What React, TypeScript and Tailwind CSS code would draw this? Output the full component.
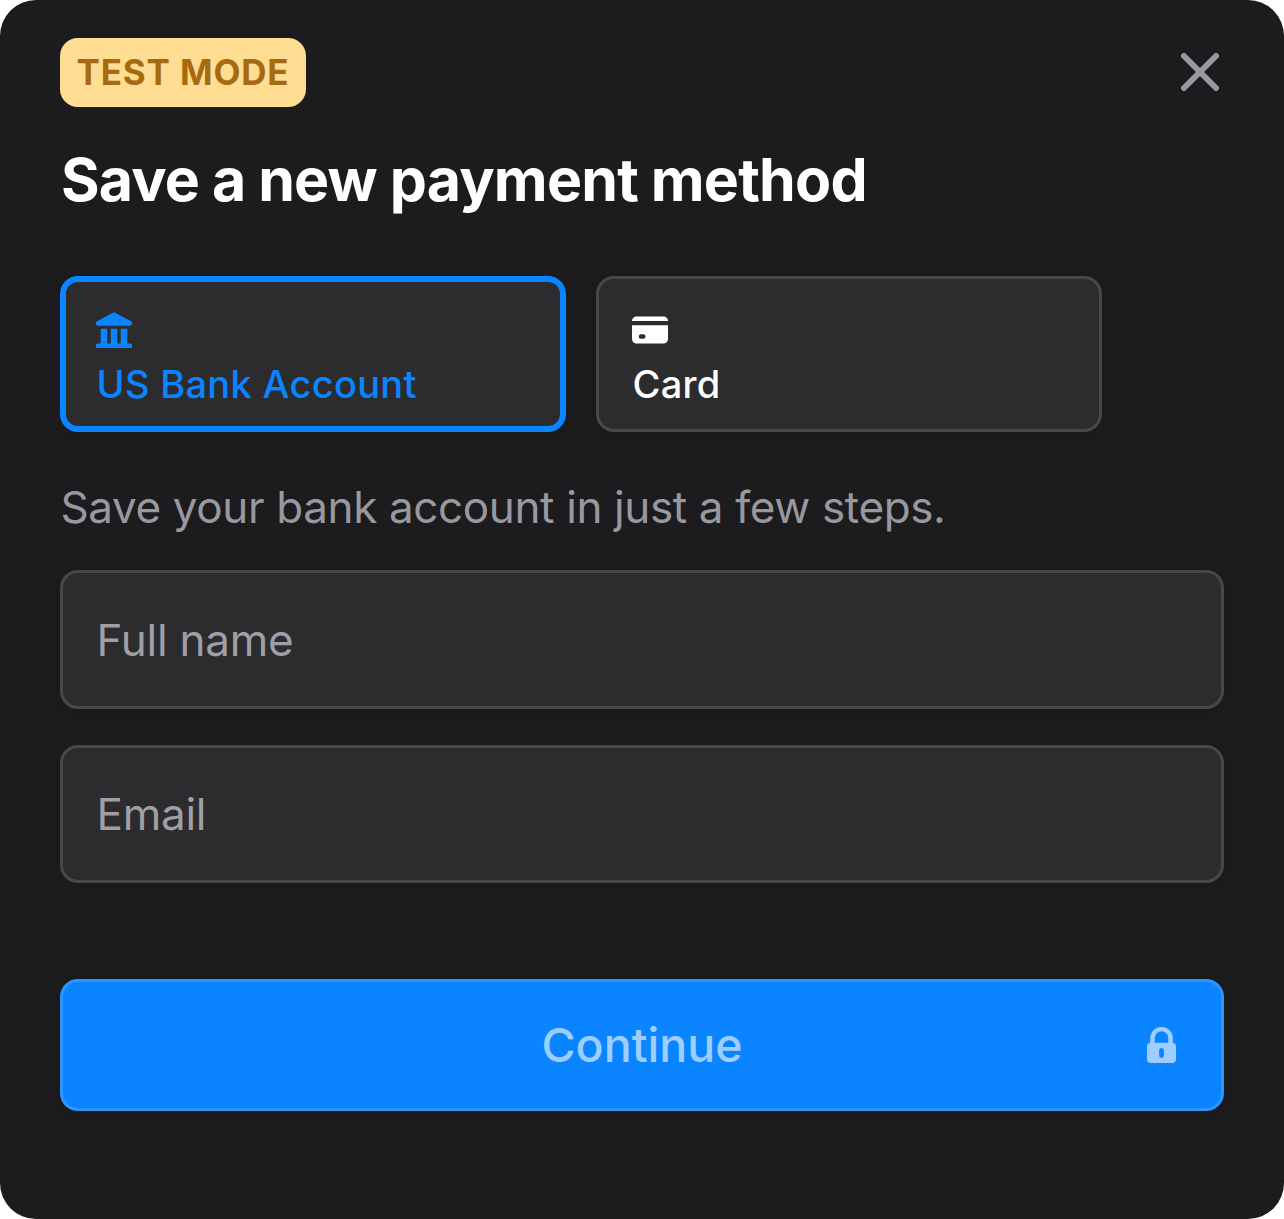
function CloseIcon() {
  return (
    <svg viewBox="0 0 38 38" className="h-[38px] w-[38px]" fill="none" stroke="#98989f" strokeWidth="6" strokeLinecap="round">
      <path d="M3 3 35 35M35 3 3 35" />
    </svg>
  );
}

function BankIcon() {
  return (
    <svg viewBox="0 0 36 36" className="h-9 w-9 shrink-0" fill="currentColor">
      <path d="M17.2.4a1.7 1.7 0 0 1 1.600 0L35 9.300c.6.3 1 .9 1 1.600v.8c0 1.100-.9 2-2 2H2c-1.100 0-2-.9-2-2v-.8c0-.7.4-1.300 1-1.600z" />
      <path d="M4.700 16.700h6.600v14.800h3.400V16.700h6.600v14.800h3.400V16.700h6.600v14.800H34a2 2 0 0 1 2 2V36H0v-2.500a2 2 0 0 1 2-2h2.700z" />
    </svg>
  );
}

function CardIcon() {
  return (
    <svg viewBox="0 0 36 36" className="h-9 w-9 shrink-0" fill="currentColor">
      <path d="M4.500 4.400h27A4.500 4.500 0 0 1 36 8.900H0a4.500 4.500 0 0 1 4.500-4.500z" />
      <path
        fillRule="evenodd"
        d="M0 13.300h36v13.800a4.500 4.500 0 0 1-4.500 4.500h-27A4.500 4.500 0 0 1 0 27.100zM9 22.300a2.250 2.250 0 0 0 0 4.500h2.300a2.250 2.250 0 0 0 0-4.500z"
      />
    </svg>
  );
}

function LockIcon() {
  return (
    <svg viewBox="0 0 29 36" className="h-9 w-[29px]" fill="currentColor">
      <path
        fillRule="evenodd"
        d="M3.200 15.700V11.300a11.300 11.300 0 0 1 22.600 0v4.400A3.700 3.700 0 0 1 29 19.400V32a4 4 0 0 1-4 4H4a4 4 0 0 1-4-4V19.400a3.700 3.700 0 0 1 3.200-3.700zM7.700 15.700h13.600V11.100a6.800 6.800 0 0 0-13.600 0zM14.500 21a2.400 2.400 0 0 0-2.400 2.400v5.200a2.400 2.400 0 0 0 4.800 0v-5.200a2.400 2.400 0 0 0-2.400-2.400z"
      />
    </svg>
  );
}

export default function App() {
  return (
    <div className="h-[1219px] w-[1284px] bg-white font-['Inter',sans-serif]">
      <main className="flex h-full flex-col rounded-[36px] bg-[#1c1c1e] px-[60px] pt-[38px]">
        <header className="flex items-start justify-between">
          <span className="flex h-[69px] w-[246px] items-center rounded-[18px] bg-[#ffdd93] pl-[16.5px] text-[35px] font-[670] whitespace-nowrap tracking-[0.85px] text-[#a86a10]">
            TEST MODE
          </span>
          <button aria-label="Close" className="mt-[15px] mr-[5px]">
            <CloseIcon />
          </button>
        </header>

        <h1 className="mt-[38px] pl-px text-[59px] leading-[70px] font-bold tracking-[-0.8px] [word-spacing:-0.4px] text-white">
          Save a new payment method
        </h1>

        <div className="mt-[61px] flex gap-[30px]">
          <button className="flex h-[156px] w-[506px] flex-col items-start rounded-[18px] border-[6px] border-[#0a84ff] bg-[#2c2c2e] px-[30px] pt-[30px] text-[#0a84ff] shadow-[0_3px_9px_rgba(0,0,0,0.08)]">
            <BankIcon />
            <span className="mt-[13px] pl-[0.5px] text-[38px] leading-[46px] font-medium tracking-[0.3px]">US Bank Account</span>
          </button>
          <button className="flex h-[156px] w-[506px] flex-col items-start rounded-[18px] border-[3px] border-[#48484a] bg-[#2c2c2e] px-[33px] pt-[33px] text-white shadow-[0_3px_9px_rgba(0,0,0,0.08)]">
            <CardIcon />
            <span className="mt-[13px] pl-[0.5px] text-[38px] leading-[46px] font-medium tracking-[0.3px]">Card</span>
          </button>
        </div>

        <p className="mt-12 pl-[0.5px] text-[44px] leading-[54px] tracking-[-0.37px] text-[#98989f]">
          Save your bank account in just a few steps.
        </p>

        <div className="mt-9 flex flex-col gap-9 text-[44px] tracking-[-0.25px] text-[#9f9fa5]">
          <div className="flex h-[139px] items-center rounded-[18px] border-[3px] border-[#48484a] bg-[#2c2c2e] px-[33.5px] shadow-[0_3px_9px_rgba(0,0,0,0.08)]">
            Full name
          </div>
          <div className="flex h-[138px] items-center rounded-[18px] border-[3px] border-[#48484a] bg-[#2c2c2e] px-[33.5px] shadow-[0_3px_9px_rgba(0,0,0,0.08)]">
            Email
          </div>
        </div>

        <button className="mt-24 grid h-[132px] grid-cols-[1fr_auto_1fr] items-center rounded-[18px] border-[3px] border-[#2e95ff] bg-[#0a84ff] px-[45px] text-[#9dceff] shadow-[0_3px_9px_rgba(0,0,0,0.08)]">
          <span className="col-start-2 pt-0.5 text-[46.5px] font-medium">Continue</span>
          <span className="justify-self-end">
            <LockIcon />
          </span>
        </button>
      </main>
    </div>
  );
}
